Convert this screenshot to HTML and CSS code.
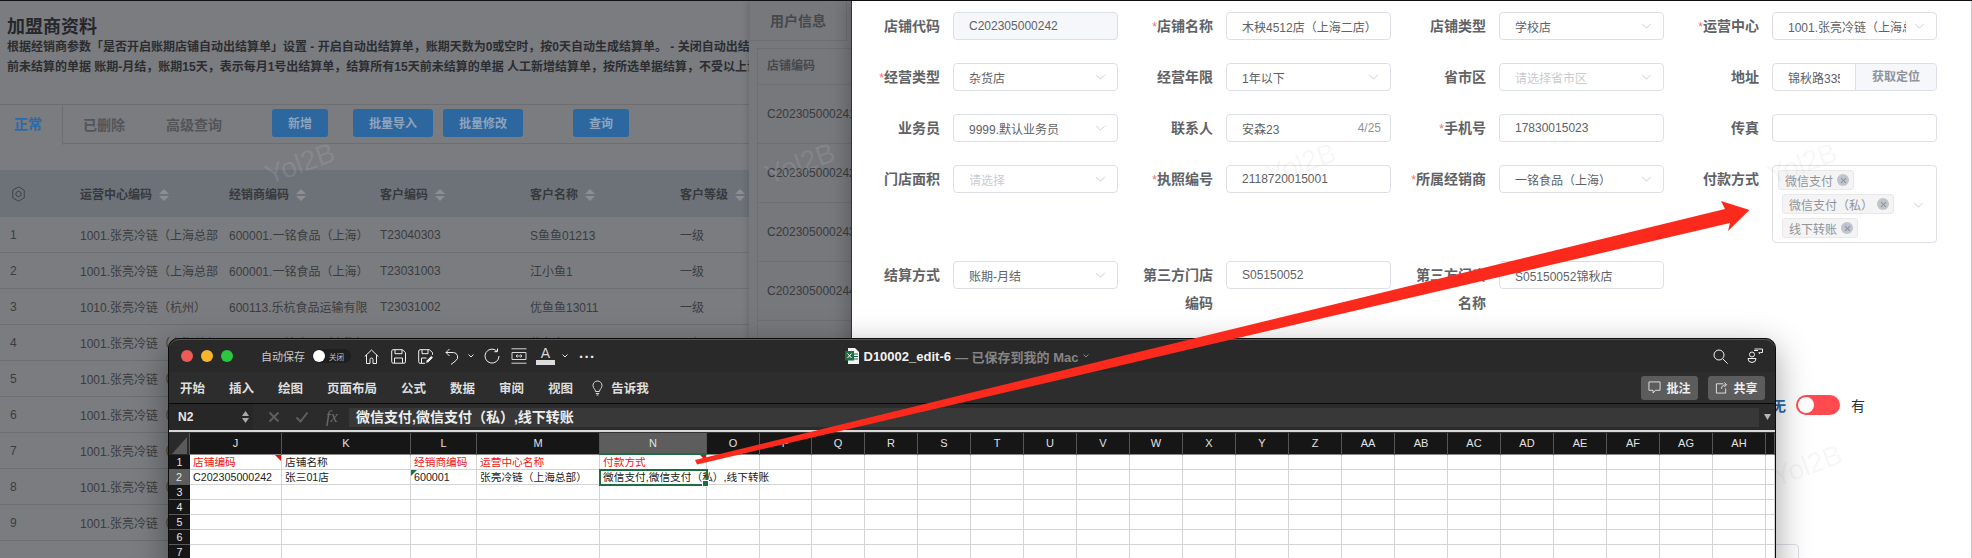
FILE: index.html
```html
<!DOCTYPE html>
<html lang="zh-CN">
<head>
<meta charset="utf-8">
<title>加盟商资料</title>
<link rel="stylesheet" href="styles.css">
</head>
<body>
<div class="desk">

  <section class="win list-pane">
    <h1 class="list-title">加盟商资料</h1>
    <p class="list-desc">根据经销商参数「是否开启账期店铺自动出结算单」设置 - 开启自动出结算单，账期天数为0或空时，按0天自动生成结算单。 - 关闭自动出结算单<br>前未结算的单据 账期-月结，账期15天，表示每月1号出结算单，结算所有15天前未结算的单据 人工新增结算单，按所选单据结算，不受以上设置</p>
    <div class="toolbar">
      <div class="tab tab-on">正常</div>
      <div class="tab">已删除</div>
      <div class="tab">高级查询</div>
      <button class="btn btn-add">新增</button>
      <button class="btn btn-imp">批量导入</button>
      <button class="btn btn-mod">批量修改</button>
      <button class="btn btn-qry">查询</button>
    </div>
    <div class="tbl-head tbl-grid">
      <div><svg class="gear" viewBox="0 0 16 18"><path d="M8 1l6.5 3.7v8.6L8 17l-6.5-3.7V4.700z"/><circle cx="8" cy="9" r="3"/></svg></div>
      <div>运营中心编码<i class="sort"></i></div>
      <div>经销商编码<i class="sort"></i></div>
      <div>客户编码<i class="sort"></i></div>
      <div>客户名称<i class="sort"></i></div>
      <div>客户等级<i class="sort"></i></div>
    </div>
    <div class="tbl-row tbl-grid"><div>1</div><div>1001.张亮冷链（上海总部</div><div>600001.一铭食品（上海）</div><div>T23040303</div><div>S鱼鱼01213</div><div>一级</div></div>
    <div class="tbl-row tbl-grid"><div>2</div><div>1001.张亮冷链（上海总部</div><div>600001.一铭食品（上海）</div><div>T23031003</div><div>江小鱼1</div><div>一级</div></div>
    <div class="tbl-row tbl-grid"><div>3</div><div>1010.张亮冷链（杭州）</div><div>600113.乐杭食品运输有限</div><div>T23031002</div><div>优鱼鱼13011</div><div>一级</div></div>
    <div class="tbl-row tbl-grid"><div>4</div><div>1001.张亮冷链（上海总部</div><div>600001.一铭食品（上海）</div><div>T23031001</div><div>优鱼鱼01011</div><div>一级</div></div>
    <div class="tbl-row tbl-grid"><div>5</div><div>1001.张亮冷链（上海总部</div></div>
    <div class="tbl-row tbl-grid"><div>6</div><div>1001.张亮冷链（上海总部</div></div>
    <div class="tbl-row tbl-grid"><div>7</div><div>1001.张亮冷链（上海总部</div></div>
    <div class="tbl-row tbl-grid"><div>8</div><div>1001.张亮冷链（上海总部</div></div>
    <div class="tbl-row tbl-grid"><div>9</div><div>1001.张亮冷链（上海总部</div></div>
    <span class="mark mark-dark mark-a">Yol2B</span>
  </section>

  <section class="win user-pane">
    <div class="user-tab">用户信息</div>
    <div class="user-table">
      <div class="user-head">店铺编码</div>
      <div class="user-row">C202305000241</div>
      <div class="user-row">C202305000242</div>
      <div class="user-row">C202305000243</div>
      <div class="user-row">C202305000244</div>
      <div class="user-row">C202305000245</div>
    </div>
    <span class="mark mark-dark mark-b">Yol2B</span>
  </section>

  <section class="win form-pane">
    <div class="form-row">
      <div class="field"><label class="flabel">店铺代码</label><div class="ctl ctl-off">C202305000242</div></div>
      <div class="field"><label class="flabel"><b class="req">*</b>店铺名称</label><div class="ctl">木秧4512店（上海二店）</div></div>
      <div class="field"><label class="flabel">店铺类型</label><div class="ctl">学校店<svg class="chev" viewBox="0 0 12 7"><path d="M1 1l5 5 5-5"/></svg></div></div>
      <div class="field"><label class="flabel"><b class="req">*</b>运营中心</label><div class="ctl"><span class="clip">1001.张亮冷链（上海总部）</span><svg class="chev" viewBox="0 0 12 7"><path d="M1 1l5 5 5-5"/></svg></div></div>
    </div>
    <div class="form-row">
      <div class="field"><label class="flabel"><b class="req">*</b>经营类型</label><div class="ctl">杂货店<svg class="chev" viewBox="0 0 12 7"><path d="M1 1l5 5 5-5"/></svg></div></div>
      <div class="field"><label class="flabel">经营年限</label><div class="ctl">1年以下<svg class="chev" viewBox="0 0 12 7"><path d="M1 1l5 5 5-5"/></svg></div></div>
      <div class="field"><label class="flabel">省市区</label><div class="ctl ctl-ph">请选择省市区<svg class="chev" viewBox="0 0 12 7"><path d="M1 1l5 5 5-5"/></svg></div></div>
      <div class="field"><label class="flabel">地址</label><div class="ctl ctl-group"><span class="group-text">锦秋路335号</span><span class="group-btn">获取定位</span></div></div>
    </div>
    <div class="form-row">
      <div class="field"><label class="flabel">业务员</label><div class="ctl">9999.默认业务员<svg class="chev" viewBox="0 0 12 7"><path d="M1 1l5 5 5-5"/></svg></div></div>
      <div class="field"><label class="flabel">联系人</label><div class="ctl">安森23<span class="count">4/25</span></div></div>
      <div class="field"><label class="flabel"><b class="req">*</b>手机号</label><div class="ctl">17830015023</div></div>
      <div class="field"><label class="flabel">传真</label><div class="ctl"></div></div>
    </div>
    <div class="form-row form-row-tall">
      <div class="field"><label class="flabel">门店面积</label><div class="ctl ctl-ph">请选择<svg class="chev" viewBox="0 0 12 7"><path d="M1 1l5 5 5-5"/></svg></div></div>
      <div class="field"><label class="flabel"><b class="req">*</b>执照编号</label><div class="ctl">2118720015001</div></div>
      <div class="field"><label class="flabel"><b class="req">*</b>所属经销商</label><div class="ctl">一铭食品（上海）<svg class="chev" viewBox="0 0 12 7"><path d="M1 1l5 5 5-5"/></svg></div></div>
      <div class="field"><label class="flabel">付款方式</label>
        <div class="ctl-tags">
          <span class="tag tag-first">微信支付<i class="tag-x"></i></span>
          <span class="tag">微信支付（私）<i class="tag-x"></i></span>
          <span class="tag">线下转账<i class="tag-x"></i></span>
          <svg class="chev chev-tags" viewBox="0 0 12 7"><path d="M1 1l5 5 5-5"/></svg>
        </div>
      </div>
    </div>
    <div class="form-row">
      <div class="field"><label class="flabel">结算方式</label><div class="ctl">账期-月结<svg class="chev" viewBox="0 0 12 7"><path d="M1 1l5 5 5-5"/></svg></div></div>
      <div class="field"><label class="flabel">第三方门店<br>编码</label><div class="ctl">S05150052</div></div>
      <div class="field"><label class="flabel">第三方门店<br>名称</label><div class="ctl">S05150052锦秋店</div></div>
    </div>
    <div class="switch-row">
      <span class="sw-off">无</span>
      <span class="sw"><i class="sw-knob"></i></span>
      <span class="sw-on">有</span>
    </div>
    <div class="stub-box"></div>
    <span class="mark mark-light mark-c">Yol2B</span>
    <span class="mark mark-light mark-d">Yol2B</span>
    <span class="mark mark-light mark-e">Yol2B</span>
  </section>

  <section class="win excel">
    <div class="x-title">
      <i class="light light-r"></i><i class="light light-y"></i><i class="light light-g"></i>
      <span class="autosave">自动保存</span>
      <span class="as-toggle"><i class="as-knob"></i><span class="as-text">关闭</span></span>
      <svg class="ti ti-home" viewBox="0 0 15 15"><path d="M.7 7.500L7.500 1l6.800 6.500M2.500 6v8.500H6v-4a1.500 1.500 0 0 1 3 0v4h3.500V6"/></svg>
      <svg class="ti" viewBox="0 0 15 15"><path d="M2 .7h9.500l3 3v9a1.500 1.500 0 0 1-1.500 1.500H2A1.500 1.500 0 0 1 .7 12.700V2A1.500 1.500 0 0 1 2 .7zM4 .7v4h7v-4M3.500 14v-5h8v5"/></svg>
      <svg class="ti" viewBox="0 0 15 15"><path d="M7 14.300H2A1.500 1.500 0 0 1 .7 12.700V2A1.500 1.500 0 0 1 2 .7h9.500l3 3v2M4 .7v4h6v-4M3.500 14V9h5"/><path class="ti-fill" d="M7.500 14.500l.7-3 5-5 2.200 2.200-5 5z"/></svg>
      <svg class="ti ti-undo" viewBox="0 0 14 17"><path d="M4.500 1L1 4.500 4.500 8M1 4.500h7.500a4.500 4.500 0 0 1 2.500 8L6 16.500"/></svg>
      <svg class="ti-chev" viewBox="0 0 6 4"><path d="M.5.5L3 3 5.500.5"/></svg>
      <svg class="ti ti-redo" viewBox="0 0 16 16"><path d="M13 3.200A7 7 0 1 0 15 8M13.500.5v3.200h-3.200"/></svg>
      <svg class="ti ti-cap" viewBox="0 0 16 16"><path d="M.5.8h15M.5 15.200h15M1 4.500h14v7H1zM5 8h6M9.500 6.500L11 8 9.500 9.500M6.500 6.500L5 8l1.500 1.500"/></svg>
      <span class="font-a">A</span>
      <svg class="ti-chev ti-chev-a" viewBox="0 0 6 4"><path d="M.5.5L3 3 5.500.5"/></svg>
      <span class="dots">···</span>
      <svg class="xl-icon" viewBox="0 0 14 16"><path class="xl-page" d="M3 0h7l4 4v12H3z"/><path class="xl-lines" d="M9 6h4M9 8.500h4M9 11h4"/><rect class="xl-green" x="0" y="3" width="9" height="9.500"/><path class="xl-x" d="M2.500 5.500l4 4.500M6.500 5.500l-4 4.500"/></svg>
      <span class="file-name">D10002_edit-6</span>
      <span class="file-state">— 已保存到我的 Mac</span>
      <svg class="ti-chev ti-chev-file" viewBox="0 0 6 4"><path d="M.5.5L3 3 5.500.5"/></svg>
      <svg class="ti ti-search" viewBox="0 0 15 15"><circle cx="6" cy="6" r="5"/><path d="M9.700 9.700l5 5"/></svg>
      <svg class="ti ti-people" viewBox="0 0 16 16"><circle cx="5" cy="6.500" r="2.500"/><path d="M1 10.500h8a4 4 0 0 1-8 0zM7.500 1h4M11.500 1h4v3.500h-2l-1 1.200v-1.200h-1M7 2.500l4 0"/></svg>
    </div>
    <div class="x-ribbon">
      <span>开始</span><span>插入</span><span>绘图</span><span>页面布局</span><span>公式</span><span>数据</span><span>审阅</span><span>视图</span>
      <span class="tell"><svg class="bulb" viewBox="0 0 11 16"><path d="M3.500 11.500C3.500 9 1 8.500 1 5.500a4.500 4.500 0 0 1 9 0c0 3-2.500 3.500-2.500 6zM3.800 13.500h3.400M4.500 15h2"/></svg>告诉我</span>
      <div class="x-actions">
        <span class="x-btn"><svg class="xb-icon" viewBox="0 0 14 14"><path d="M1 1h12v9H8l-2.500 3v-3H1z"/></svg>批注</span>
        <span class="x-btn"><svg class="xb-icon" viewBox="0 0 14 14"><path d="M9 3H1.500v10h10V8M7 8.500c0-3 2-4.500 5-4.500M10 1.500L12.500 4 10 6.500"/></svg>共享</span>
      </div>
    </div>
    <div class="x-formula">
      <div class="name-box"><span>N2</span><span class="stepper"><i class="st-up"></i><i class="st-down"></i></span></div>
      <svg class="fb-mark" viewBox="0 0 14 14"><path d="M2.500 2.500l9 9M11.500 2.500l-9 9"/></svg>
      <svg class="fb-mark" viewBox="0 0 14 14"><path d="M1.500 7.500l4 4 7-9"/></svg>
      <span class="fx">fx</span>
      <div class="fb-input">微信支付,微信支付（私）,线下转账</div>
      <i class="fb-drop"></i>
    </div>
    <div class="x-sep"></div>
    <div class="sheet-head sheet-grid">
      <div class="corner"><i class="corner-tri"></i></div>
      <div>J</div><div>K</div><div>L</div><div>M</div><div class="col-on">N</div><div>O</div><div>P</div><div>Q</div><div>R</div><div>S</div><div>T</div><div>U</div><div>V</div><div>W</div><div>X</div><div>Y</div><div>Z</div><div>AA</div><div>AB</div><div>AC</div><div>AD</div><div>AE</div><div>AF</div><div>AG</div><div>AH</div><div></div>
    </div>
    <div class="sheet-row sheet-grid"><div class="rh">1</div><div class="red tri-r">店铺编码</div><div>店铺名称</div><div class="red">经销商编码</div><div class="red">运营中心名称</div><div class="red tri-r">付款方式</div><div></div><div></div><div></div><div></div><div></div><div></div><div></div><div></div><div></div><div></div><div></div><div></div><div></div><div></div><div></div><div></div><div></div><div></div><div></div><div></div><div></div></div>
    <div class="sheet-row sheet-grid"><div class="rh rh-on">2</div><div>C202305000242</div><div>张三01店</div><div class="tri-g">600001</div><div>张亮冷链（上海总部）</div><div class="sel-cell">微信支付,微信支付（私）,线下转账<i class="sel-box"></i></div><div></div><div></div><div></div><div></div><div></div><div></div><div></div><div></div><div></div><div></div><div></div><div></div><div></div><div></div><div></div><div></div><div></div><div></div><div></div><div></div><div></div></div>
    <div class="sheet-row sheet-grid"><div class="rh">3</div><div></div><div></div><div></div><div></div><div></div><div></div><div></div><div></div><div></div><div></div><div></div><div></div><div></div><div></div><div></div><div></div><div></div><div></div><div></div><div></div><div></div><div></div><div></div><div></div><div></div><div></div></div>
    <div class="sheet-row sheet-grid"><div class="rh">4</div><div></div><div></div><div></div><div></div><div></div><div></div><div></div><div></div><div></div><div></div><div></div><div></div><div></div><div></div><div></div><div></div><div></div><div></div><div></div><div></div><div></div><div></div><div></div><div></div><div></div><div></div></div>
    <div class="sheet-row sheet-grid"><div class="rh">5</div><div></div><div></div><div></div><div></div><div></div><div></div><div></div><div></div><div></div><div></div><div></div><div></div><div></div><div></div><div></div><div></div><div></div><div></div><div></div><div></div><div></div><div></div><div></div><div></div><div></div><div></div></div>
    <div class="sheet-row sheet-grid"><div class="rh">6</div><div></div><div></div><div></div><div></div><div></div><div></div><div></div><div></div><div></div><div></div><div></div><div></div><div></div><div></div><div></div><div></div><div></div><div></div><div></div><div></div><div></div><div></div><div></div><div></div><div></div><div></div></div>
    <div class="sheet-row sheet-grid"><div class="rh">7</div><div></div><div></div><div></div><div></div><div></div><div></div><div></div><div></div><div></div><div></div><div></div><div></div><div></div><div></div><div></div><div></div><div></div><div></div><div></div><div></div><div></div><div></div><div></div><div></div><div></div><div></div></div>
  </section>

  <svg class="arrow" viewBox="0 0 1972 558"><polygon points="695,460 1725,209 1721,201 1749.500,210 1728,231 1730,223 697,464.500"/></svg>
</div>
</body>
</html>
```
FILE: styles.css
```css
* { box-sizing: border-box; }
html, body { margin: 0; padding: 0; }
body { font-family: "Liberation Sans", "Noto Sans CJK SC", sans-serif; }
.desk { position: relative; width: 1972px; height: 558px; overflow: hidden; background: #7a7c80; border-top: 1px solid #111; }
.win { position: absolute; top: 0; height: 558px; }

/* list pane */
.list-pane { left: 0; width: 860px; background: #7a7c80; color: #36383b; overflow: hidden; }
.list-title { margin: 15px 0 0 7px; font-size: 18px; line-height: 22px; font-weight: 700; color: #26272a; }
.list-desc { margin: 0 0 0 7px; padding-top: 0; width: 850px; white-space: nowrap; overflow: hidden; font-size: 12px; line-height: 19.500px; font-weight: 700; color: #2c2d30; }
.toolbar { position: relative; display: flex; align-items: center; height: 40px; margin-top: 27px; border-top: 1px solid #6c6e72; border-bottom: 1px solid #6c6e72; font-size: 14px; }
.tab { color: #53555a; padding-right: 22px; font-weight: 700; }
.tab:nth-child(2) { padding-left: 20px; padding-right: 41px; }
.tab:nth-child(3) { padding: 0; }
.tab-on { color: #2d6aa9; height: 40px; line-height: 38px; width: 63px; padding: 0 0 0 14px; margin-bottom: -2px; border-right: 1px solid #6c6e72; background: #7a7c80; }
.btn { height: 28px; padding: 0; border: 0; border-radius: 3px; background: #2d679f; color: #8fa4bd; font: 700 12px "Liberation Sans", "Noto Sans CJK SC", sans-serif; }
.btn-add { width: 56px; margin: -3px 0 0 50px; }
.btn-imp { width: 80px; margin: -3px 0 0 25px; }
.btn-mod { width: 80px; margin: -3px 0 0 10px; }
.btn-qry { width: 56px; margin: -3px 0 0 50px; }
.tbl-grid { display: grid; grid-template-columns: 80px 149px 151px 150px 150px 150px; align-items: center; font-size: 12px; }
.tbl-grid > div { white-space: nowrap; overflow: hidden; padding-right: 10px; }
.tbl-grid > div:first-child { padding-left: 10px; }
.tbl-head { height: 47px; margin-top: 26px; background: #6d7279; font-weight: 700; color: #37393c; }
.gear { display: block; width: 15px; height: 16px; margin-left: 1px; fill: none; stroke: #3c3e42; stroke-width: 1; }
.sort { position: relative; display: inline-block; width: 10px; height: 12px; margin-left: 7px; vertical-align: -2px; }
.sort::before, .sort::after { content: ""; position: absolute; left: 0; width: 10px; height: 5px; background: #8b8e93; }
.sort::before { top: 0; clip-path: polygon(50% 0, 100% 100%, 0 100%); }
.sort::after { bottom: 0; clip-path: polygon(0 0, 100% 0, 50% 100%); }
.tbl-row { height: 36px; border-bottom: 1px solid #6d6f73; color: #3a3c3f; }

/* user pane */
.user-pane { left: 749px; width: 102px; background: #76787c; color: #46484c; overflow: hidden; box-shadow: -2px 0 6px rgba(0,0,0,.12); }
.user-tab { width: 98px; height: 39px; margin-top: 1px; border: 1px solid #6d6f73; border-top: 0; font-size: 14px; font-weight: 700; line-height: 38px; text-align: center; }
.user-table { margin: 7px 0 0 8px; border-top: 1px solid #6d6f73; border-left: 1px solid #6d6f73; font-size: 12px; }
.user-head { height: 36px; line-height: 34px; padding-left: 9px; font-weight: 700; border-bottom: 1px solid #6d6f73; }
.user-row { height: 59px; line-height: 59px; padding-left: 9px; white-space: nowrap; overflow: hidden; border-bottom: 1px solid #6d6f73; color: #393b3e; }

/* form pane */
.form-pane { left: 851px; width: 1121px; padding: 11px 0 0 1px; background: #fff; border-left: 1px solid #333; border-right: 1px solid #c8c8c8; box-shadow: -6px 0 14px rgba(0,0,0,.18); }
.form-row { display: flex; align-items: flex-start; margin-bottom: 23px; }
.form-row-tall { margin-bottom: 18px; }
.field { display: flex; width: 273px; flex: none; }
.flabel { width: 87px; flex: none; margin-right: 13px; text-align: right; font-size: 14px; line-height: 28px; font-weight: 700; color: #606266; }
.req { color: #f56c6c; font-size: 12px; font-weight: 400; line-height: 0; }
.ctl { position: relative; display: flex; align-items: center; width: 165px; height: 28px; flex: none; padding-left: 15px; border: 1px solid #dcdfe6; border-radius: 4px; background: #fff; font-size: 12px; color: #606266; white-space: nowrap; }
.ctl-off { background: #f5f7fa; }
.ctl-ph { color: #c9ccd3; }
.clip { width: 118px; overflow: hidden; }
.chev { position: absolute; right: 11px; top: 10px; width: 11px; height: 6px; fill: none; stroke: #c0c4cc; stroke-width: 1; }
.count { position: absolute; right: 9px; color: #909399; }
.ctl-group { padding: 0; overflow: hidden; }
.group-text { width: 52px; margin: 0 15px; overflow: hidden; }
.group-btn { flex: 1; height: 100%; line-height: 26px; text-align: center; background: #f5f7fa; border-left: 1px solid #dcdfe6; color: #909399; font-weight: 700; }
.ctl-tags { position: relative; display: flex; flex-direction: column; align-items: flex-start; gap: 4px; width: 165px; height: 78px; flex: none; padding: 4px 0 0 9px; border: 1px solid #dcdfe6; border-radius: 4px; }
.chev-tags { top: 36px; right: 12px; }
.tag { display: flex; align-items: center; height: 20px; padding: 0 4px 0 6px; gap: 4px; border: 1px solid #e9e9eb; border-radius: 3px; background: #f4f4f5; font-size: 12px; color: #909399; white-space: nowrap; }
.tag-first { margin-left: -4px; }
.tag-x { position: relative; display: block; width: 12px; height: 12px; border-radius: 50%; background: #c0c4cc; }
.tag-x::before, .tag-x::after { content: ""; position: absolute; left: 2.500px; top: 5.500px; width: 7px; height: 1px; background: #909399; transform: rotate(45deg); }
.tag-x::after { transform: rotate(-45deg); }
.switch-row { display: flex; align-items: center; height: 20px; margin: 78px 0 0 919px; font-size: 14px; color: #303133; font-weight: 400; }
.sw-off { color: #2d6aa9; font-weight: 700; }
.sw { display: block; width: 44px; height: 20px; margin: 0 11px 0 10px; padding: 2px; border-radius: 10px; background: #ff4a50; }
.sw-knob { display: block; width: 16px; height: 16px; border-radius: 50%; background: #fff; }
.stub-box { width: 260px; height: 40px; margin: 129px 0 0 686px; border: 1px solid #dcdfe6; border-radius: 4px; }

/* watermarks */
.mark { position: absolute; font-size: 28px; line-height: 32px; transform: rotate(-20deg); white-space: nowrap; pointer-events: none; }
.mark-dark { color: rgba(255,255,255,.1); }
.mark-light { color: rgba(0,0,0,.05); }
.mark-a { left: 264px; top: 147px; }
.mark-b { left: 15px; top: 147px; }
.mark-c { left: 413px; top: 147px; }
.mark-d { left: 914px; top: 147px; }
.mark-e { left: 919px; top: 449px; }

/* excel */
.excel { left: 168px; top: 337px; width: 1608px; height: 240px; background: #2a2a2a; border: 1px solid #0c0c0c; border-radius: 10px 10px 0 0; box-shadow: 0 10px 34px rgba(0,0,0,.38); }
.x-title { display: flex; align-items: center; height: 33px; padding-left: 12px; background: #292929; border-radius: 10px 10px 0 0; border-top: 1px solid #555; color: #ddd; }
.light { display: block; width: 12px; height: 12px; margin-right: 8px; border-radius: 50%; }
.light-r { background: #ec5b56; }
.light-y { background: #f5b52f; }
.light-g { background: #29c840; }
.autosave { margin: 0 7px 0 20px; font-size: 11px; color: #c9c9c9; }
.as-toggle { position: relative; display: flex; align-items: center; width: 39px; height: 14px; padding-left: 1px; border-radius: 7px; background: #1f1f1f; margin-right: 13px; }
.as-knob { display: block; width: 12px; height: 12px; border-radius: 50%; background: #fff; }
.as-text { margin-left: 4px; font-size: 7.500px; color: #c5c5c5; }
.ti { display: block; width: 15px; height: 15px; margin-right: 12px; fill: none; stroke: #f0f0f0; stroke-width: 1; }
.ti-fill { fill: #f0f0f0; stroke: #292929; }
.ti-undo { width: 14px; height: 17px; margin-right: 9px; }
.ti-chev { display: block; width: 6px; height: 4px; margin-right: 10px; fill: none; stroke: #e5e5e5; stroke-width: 1; }
.ti-redo { width: 16px; height: 16px; margin-right: 11px; }
.ti-cap { width: 16px; height: 16px; margin-right: 9px; stroke: #d8d8d8; }
.font-a { display: block; width: 19px; height: 18px; border-bottom: 5px solid #dcdcdc; font-size: 14px; line-height: 12px; font-weight: 400; text-align: center; color: #d8d8d8; margin-right: 7px; }
.dots { margin-left: 1px; font-size: 15px; line-height: 15px; font-weight: 700; color: #eee; letter-spacing: .5px; }
.xl-icon { display: block; width: 14px; height: 16px; margin-left: 249px; margin-right: 5px; }
.xl-page { fill: #f3f3f3; }
.xl-lines { stroke: #1d7044; stroke-width: 1; }
.xl-green { fill: #1d7044; }
.xl-x { stroke: #fff; stroke-width: 1; fill: none; }
.file-name { font-size: 13px; font-weight: 700; color: #f2f2f2; }
.file-state { margin-left: 4px; font-size: 13px; font-weight: 700; color: #858585; }
.ti-chev-file { margin-left: 5px; stroke: #858585; }
.ti-search { margin-left: auto; margin-right: 19px; }
.ti-people { width: 16px; height: 16px; margin-right: 12px; }
.x-ribbon { display: flex; align-items: center; height: 32px; padding: 0 10px 0 11px; gap: 24px; background: #2d2d2d; border-bottom: 1px solid #0a0a0a; font-size: 12.500px; font-weight: 700; color: #dedede; }
.tell { display: flex; align-items: center; gap: 8px; margin-left: -5px; }
.bulb { display: block; width: 11px; height: 16px; fill: none; stroke: #d8d8d8; stroke-width: 1; }
.x-actions { display: flex; gap: 10px; margin-left: auto; }
.x-btn { display: flex; align-items: center; justify-content: center; gap: 5px; width: 57px; height: 24px; border-radius: 3px; background: #5c5c5c; font-size: 12px; color: #efefef; }
.xb-icon { display: block; width: 13px; height: 13px; fill: none; stroke: #e4e4e4; stroke-width: 1; }
.x-formula { display: flex; align-items: center; height: 26px; background: #2b2b2b; }
.name-box { position: relative; display: flex; align-items: center; justify-content: space-between; width: 84px; height: 26px; padding: 0 4px 0 9px; background: #272727; font-size: 12px; font-weight: 700; color: #e5e5e5; }
.stepper { display: flex; flex-direction: column; gap: 2px; }
.st-up, .st-down { display: block; width: 7px; height: 5px; background: #aaa; clip-path: polygon(50% 0, 100% 100%, 0 100%); }
.st-down { clip-path: polygon(0 0, 100% 0, 50% 100%); }
.fb-mark { display: block; width: 14px; height: 14px; margin-left: 14px; fill: none; stroke: #5f5f5f; stroke-width: 2; }
.fx { margin: 0 7px 0 17px; width: 16px; font: italic 16px/18px "Liberation Serif", serif; color: #6f6f6f; }
.fb-input { flex: 1; height: 19px; padding-left: 7px; background: #383838; font-size: 14px; line-height: 19px; font-weight: 700; color: #eee; }
.fb-drop { display: block; width: 7px; height: 6px; margin: 0 4px 0 5px; background: #b5b5b5; clip-path: polygon(0 0, 100% 0, 50% 100%); }
.x-sep { height: 3px; background: #d8d8d8; border-bottom: 1px solid #333; }
.sheet-grid { display: grid; grid-template-columns: 21px 92px 129px 66px 123px 107px 53px 52px repeat(18, 53px) 9px; }
.sheet-head { height: 22px; background: #161616; border-bottom: 1px solid #8a8a8a; font-size: 11px; line-height: 20px; text-align: center; color: #e2e2e2; }
.sheet-head > div { border-right: 1px solid #555; }
.corner { position: relative; background: #2a2a2a; }
.corner-tri { position: absolute; right: 2px; bottom: 1px; width: 15px; height: 17px; background: #5a5a5a; clip-path: polygon(100% 0, 100% 100%, 0 100%); }
.col-on { background: #5d5d5d; border-bottom: 2px solid #1d6f42; }
.sheet-row { height: 15px; background: #fff; font-size: 10.700px; line-height: 14px; color: #222; white-space: nowrap; }
.sheet-row > div { position: relative; padding-left: 3px; border-right: 1px solid #d4d4d4; border-bottom: 1px solid #d4d4d4; }
.sheet-row > .rh { padding: 0; text-align: center; background: #161616; color: #e6e6e6; border-right: 0; border-bottom-color: #5a5a5a; }
.sheet-row > .rh-on { background: #5d5d5d; border-right: 1px solid #1d6f42; }
.red { color: #f01414; }
.tri-r::after { content: ""; position: absolute; right: 0; top: 0; width: 6px; height: 6px; background: #e01010; clip-path: polygon(0 0, 100% 0, 100% 100%); }
.tri-g::after { content: ""; position: absolute; left: 0; top: 0; width: 6px; height: 6px; background: #1d7044; clip-path: polygon(0 0, 100% 0, 0 100%); }
.sel-cell { z-index: 1; }
.sel-box { position: absolute; left: -1px; top: -1px; width: 109px; height: 17px; border: 2px solid #1d6f42; pointer-events: none; }
.sel-box::after { content: ""; position: absolute; right: -3px; bottom: -3px; width: 5px; height: 5px; background: #1d6f42; border: 1px solid #fff; }

.arrow { position: absolute; left: 0; top: -1px; width: 1972px; height: 558px; fill: #fb2a1c; pointer-events: none; }
```
